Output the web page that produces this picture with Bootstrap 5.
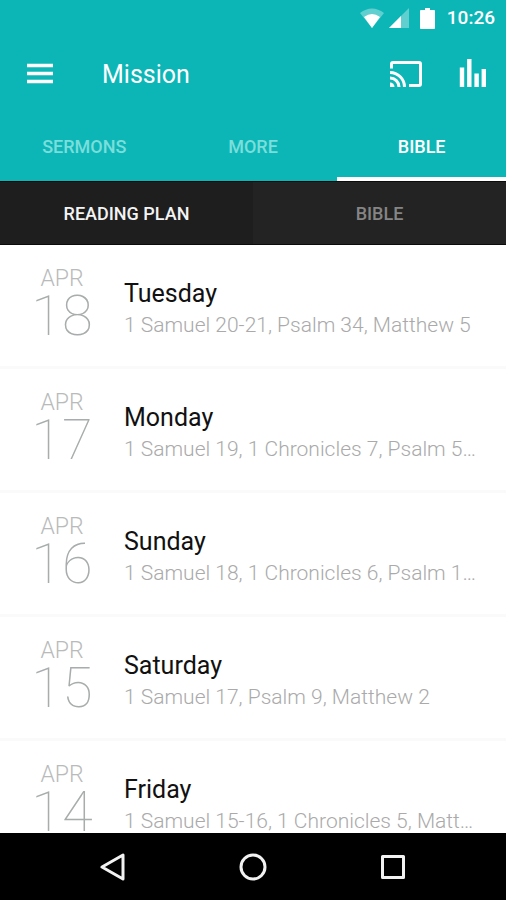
<!DOCTYPE html>
<html lang="en">
<head>
<meta charset="utf-8">
<meta name="viewport" content="width=device-width, initial-scale=1">
<title>Mission</title>
<link href="https://cdn.jsdelivr.net/npm/bootstrap@5.3.0/dist/css/bootstrap.min.css" rel="stylesheet">
<style>
body { font-family: Roboto, "Liberation Sans", sans-serif; }
.app-top { background: #0db6b6; }
.status-bar { height: 36px; padding-right: 11px; font-size: 19px; line-height: 36px; }
.status-bar time { margin-left: 10px; }
.tool-bar { height: 76px; padding: 0 19px 0 25px; }
.tool-bar h1 { font-size: 25px; line-height: 32px; margin-left: 47px; padding-top: 2px; }
.icon-btn { line-height: 0; }
.tool-actions { gap: 36px; }
.tab-btn { height: 69px; padding-top: 10px; border-bottom: 4px solid transparent; font-size: 18px; line-height: 24px; font-weight: 500; color: #7adedc; }
.tab-btn.active { color: #fff; border-bottom-color: #fff; }
.sub-tabs { border-top: 1px solid #0b0b0b; border-bottom: 1px solid #0b0b0b; }
.sub-btn { height: 62px; padding-top: 8px; background: #232323; color: #858585; font-size: 18px; line-height: 24px; font-weight: 500; }
.sub-btn.active { background: #1e1e1e; color: #f3f3f3; }
.plan-row { height: 124px; padding: 22px 27px 0 30px; border-bottom: 3px solid #fafafa; color: #b9bbbb; }
.plan-row:hover { color: #b9bbbb; }
.plan-date { width: 64px; margin-right: 30px; }
.plan-month { font-size: 23px; line-height: 24px; font-weight: 300; }
.plan-day { font-size: 56px; line-height: 50px; font-weight: 100; color: #a8acac; }
.plan-text { padding-top: 11px; }
.plan-name { font-size: 25px; line-height: 32px; color: #111; }
.plan-verses { font-size: 21px; line-height: 30px; font-weight: 300; color: #aaa; }
.sys-nav { height: 67px; gap: 112px; }
</style>
<script defer src="https://cdn.jsdelivr.net/npm/bootstrap@5.3.0/dist/js/bootstrap.bundle.min.js"></script>
</head>
<body class="vh-100 d-flex flex-column overflow-hidden bg-white">
<header class="app-top text-white flex-shrink-0">
  <div class="status-bar d-flex justify-content-end align-items-center fw-medium">
    <svg width="26" height="20" viewBox="0 0 26 20" aria-hidden="true"><path d="M1 5Q13-4 25 5L13 20Z" fill="#fff" opacity=".35"/><path d="M5 9Q13 3 21 9L13 20Z" fill="#fff"/></svg>
    <svg class="ms-1" width="20" height="20" viewBox="0 0 20 20" aria-hidden="true"><path d="M0 20L20 0V20Z" fill="#fff" opacity=".35"/><path d="M0 20L12 8V20Z" fill="#fff"/></svg>
    <svg class="ms-2" width="20" height="21" viewBox="0 0 20 21" aria-hidden="true"><path d="M8 0h5v2h4q1 0 1 1v17q0 1-1 1H4q-1 0-1-1V3q0-1 1-1h4z" fill="#fff"/></svg>
    <time>10:26</time>
  </div>
  <div class="tool-bar d-flex align-items-center">
    <button class="icon-btn btn p-0 border-0" type="button" aria-label="Menu">
      <svg width="30" height="24" viewBox="0 0 30 24"><path d="M2 3.500h26M2 11.500h26M2 19.500h26" stroke="#fff" stroke-width="3.400"/></svg>
    </button>
    <h1 class="mb-0 fw-normal">Mission</h1>
    <div class="tool-actions d-flex align-items-center ms-auto">
      <button class="icon-btn btn p-0 border-0" type="button" aria-label="Cast">
        <svg width="34" height="28" viewBox="0 0 34 28" fill="none" stroke="#fff" stroke-width="3"><path d="M2.500 8.500V4q0-1.500 1.500-1.500H30q1.500 0 1.500 1.500V24q0 1.500-1.500 1.500H20"/><path d="M1 12.500A14.500 14.500 0 0 1 15.500 27M1 18A9 9 0 0 1 10 27"/><path d="M1 22.500A4.500 4.500 0 0 1 5.500 27H1z" fill="#fff" stroke="none"/></svg>
      </button>
      <button class="icon-btn btn p-0 border-0" type="button" aria-label="Now playing">
        <svg width="28" height="30" viewBox="0 0 28 30"><path d="M3 8.500V28M10.300 0V28M17.600 14.500V28M24.800 10V28" stroke="#fff" stroke-width="4.400"/></svg>
      </button>
    </div>
  </div>
  <nav class="row g-0" aria-label="Sections">
    <button class="tab-btn col btn rounded-0 border-top-0 border-start-0 border-end-0" type="button">SERMONS</button>
    <button class="tab-btn col btn rounded-0 border-top-0 border-start-0 border-end-0" type="button">MORE</button>
    <button class="tab-btn active col btn rounded-0 border-top-0 border-start-0 border-end-0" type="button" aria-current="page">BIBLE</button>
  </nav>
</header>
<nav class="sub-tabs row g-0 flex-shrink-0" aria-label="Bible">
  <button class="sub-btn active col btn rounded-0 border-0" type="button" aria-current="page">READING PLAN</button>
  <button class="sub-btn col btn rounded-0 border-0" type="button">BIBLE</button>
</nav>
<main class="flex-fill overflow-hidden">
  <a href="#apr18" class="plan-row d-flex text-decoration-none">
    <div class="plan-date text-center flex-shrink-0"><div class="plan-month">APR</div><div class="plan-day">18</div></div>
    <div class="plan-text flex-fill overflow-hidden"><div class="plan-name">Tuesday</div><div class="plan-verses text-truncate">1 Samuel 20-21, Psalm 34, Matthew 5</div></div>
  </a>
  <a href="#apr17" class="plan-row d-flex text-decoration-none">
    <div class="plan-date text-center flex-shrink-0"><div class="plan-month">APR</div><div class="plan-day">17</div></div>
    <div class="plan-text flex-fill overflow-hidden"><div class="plan-name">Monday</div><div class="plan-verses text-truncate">1 Samuel 19, 1 Chronicles 7, Psalm 59, Matthew 4</div></div>
  </a>
  <a href="#apr16" class="plan-row d-flex text-decoration-none">
    <div class="plan-date text-center flex-shrink-0"><div class="plan-month">APR</div><div class="plan-day">16</div></div>
    <div class="plan-text flex-fill overflow-hidden"><div class="plan-name">Sunday</div><div class="plan-verses text-truncate">1 Samuel 18, 1 Chronicles 6, Psalm 11, Matthew 3</div></div>
  </a>
  <a href="#apr15" class="plan-row d-flex text-decoration-none">
    <div class="plan-date text-center flex-shrink-0"><div class="plan-month">APR</div><div class="plan-day">15</div></div>
    <div class="plan-text flex-fill overflow-hidden"><div class="plan-name">Saturday</div><div class="plan-verses text-truncate">1 Samuel 17, Psalm 9, Matthew 2</div></div>
  </a>
  <a href="#apr14" class="plan-row d-flex text-decoration-none">
    <div class="plan-date text-center flex-shrink-0"><div class="plan-month">APR</div><div class="plan-day">14</div></div>
    <div class="plan-text flex-fill overflow-hidden"><div class="plan-name">Friday</div><div class="plan-verses text-truncate">1 Samuel 15-16, 1 Chronicles 5, Matthew 1</div></div>
  </a>
</main>
<footer class="sys-nav bg-black d-flex justify-content-center align-items-center flex-shrink-0">
  <button class="icon-btn btn p-0 border-0" type="button" aria-label="Back"><svg width="28" height="28" viewBox="0 0 28 28" fill="none" stroke="#f2f2f2" stroke-width="3" stroke-linejoin="round"><path d="M24 2V26L3 14z"/></svg></button>
  <button class="icon-btn btn p-0 border-0" type="button" aria-label="Home"><svg width="28" height="28" viewBox="0 0 28 28" fill="none" stroke="#f2f2f2" stroke-width="3"><circle cx="14" cy="14" r="12"/></svg></button>
  <button class="icon-btn btn p-0 border-0" type="button" aria-label="Recent apps"><svg width="28" height="28" viewBox="0 0 28 28" fill="none" stroke="#f2f2f2" stroke-width="3" stroke-linejoin="round"><path d="M3.500 3.500h21v21h-21z"/></svg></button>
</footer>
</body>
</html>
